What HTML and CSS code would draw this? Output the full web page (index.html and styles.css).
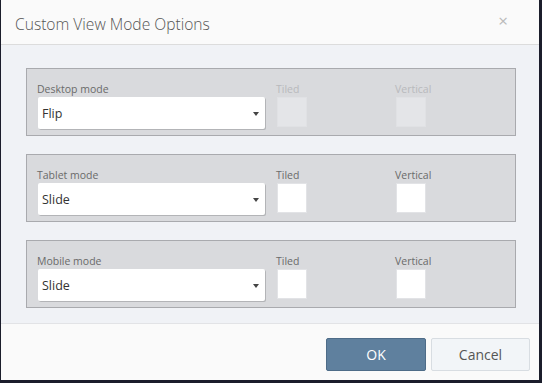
FILE: index.html
```html
<!DOCTYPE html>
<html>
<head>
<meta charset="utf-8">
<link rel="stylesheet" href="styles.css">
</head>
<body>
<div class="modal">
  <div class="header">
    <div class="title">Custom View Mode Options</div>
    <div class="close">×</div>
  </div>
  <div class="content">
    <div class="panel">
      <div class="field select-field">
        <div class="label">Desktop mode</div>
        <div class="select"><span>Flip</span><i class="caret"></i></div>
      </div>
      <div class="field check-field disabled">
        <div class="label">Tiled</div>
        <div class="box"></div>
      </div>
      <div class="field check-field disabled">
        <div class="label">Vertical</div>
        <div class="box"></div>
      </div>
    </div>
    <div class="panel">
      <div class="field select-field">
        <div class="label">Tablet mode</div>
        <div class="select"><span>Slide</span><i class="caret"></i></div>
      </div>
      <div class="field check-field">
        <div class="label">Tiled</div>
        <div class="box"></div>
      </div>
      <div class="field check-field">
        <div class="label">Vertical</div>
        <div class="box"></div>
      </div>
    </div>
    <div class="panel">
      <div class="field select-field">
        <div class="label">Mobile mode</div>
        <div class="select"><span>Slide</span><i class="caret"></i></div>
      </div>
      <div class="field check-field">
        <div class="label">Tiled</div>
        <div class="box"></div>
      </div>
      <div class="field check-field">
        <div class="label">Vertical</div>
        <div class="box"></div>
      </div>
    </div>
  </div>
  <div class="footer">
    <button class="btn btn-ok">OK</button>
    <button class="btn btn-cancel">Cancel</button>
  </div>
</div>
</body>
</html>
```
FILE: styles.css
```css
html, body {
  margin: 0;
  padding: 0;
}
body {
  background: #1b1d2b;
  font-family: "Open Sans", "DejaVu Sans", sans-serif;
  width: 542px;
  height: 383px;
  overflow: hidden;
}
.modal {
  margin-left: 1px;
  width: 538px;
  height: 380px;
  background: #fafafa;
  display: flex;
  flex-direction: column;
}
.header {
  height: 44px;
  border-bottom: 1px solid #dcdcdc;
  display: flex;
  align-items: center;
  justify-content: space-between;
  padding: 0 31px 0 14px;
  background: #fafafa;
}
.title {
  font-size: 15.6px;
  font-weight: 300;
  color: #555;
  margin-top: 3px;
}
.close {
  font-size: 17px;
  color: #b9b9b9;
  margin-top: -3px;
}
.content {
  background: #f0f2f6;
  padding: 23px 23px 15px 25px;
  display: flex;
  flex-direction: column;
  gap: 18px;
  border-bottom: 1px solid #e2e3e6;
}
.panel {
  background: #d9dadd;
  border: 1px solid #a9aaae;
  height: 66px;
  box-sizing: content-box;
  display: flex;
  padding: 0 0 0 10px;
}
.field {
  display: flex;
  flex-direction: column;
  padding-top: 13px;
}
.label {
  font-size: 10.5px;
  line-height: 15px;
  color: #6a6a6a;
  height: 15px;
}
.select-field {
  width: 228px;
}
.select {
  margin-left: 1px;
  height: 32px;
  background: #fff;
  border-radius: 2px;
  box-shadow: 1px 1px 0 #b3b4b7;
  display: flex;
  align-items: center;
  justify-content: space-between;
  padding: 0 6px 0 4px;
  font-size: 12.5px;
  color: #333;
}
.select span {
  margin-top: 1px;
}
.caret {
  width: 0;
  height: 0;
  border-left: 3.5px solid transparent;
  border-right: 3.5px solid transparent;
  border-top: 4px solid #444;
  margin-top: 1px;
}
.check-field {
  width: 119px;
  margin-left: 11px;
}
.check-field + .check-field {
  margin-left: 0;
}
.box {
  margin-left: 1px;
  width: 30px;
  height: 30px;
  background: #fff;
  box-sizing: border-box;
  border: 1px solid #e2e3e6;
}
.disabled .label {
  color: #b8b9bc;
}
.disabled .box {
  background: #e4e5e8;
  border-color: #e0e1e4;
}
.footer {
  flex: 1;
  display: flex;
  justify-content: flex-end;
  align-items: flex-start;
  padding: 14px 9px 0 0;
  gap: 5px;
  background: #fafafa;
}
.btn {
  font-family: "Open Sans", "DejaVu Sans", sans-serif;
  font-size: 14px;
  width: 100px;
  height: 33px;
  border-radius: 2px;
  padding: 0;
  margin: 0;
}
.btn-ok {
  background: #5f809e;
  border: 1px solid #4e6c88;
  color: #fff;
}
.btn-cancel {
  width: 99px;
  background: #f2f5f8;
  border: 1px solid #d8dde2;
  color: #555;
}
```
